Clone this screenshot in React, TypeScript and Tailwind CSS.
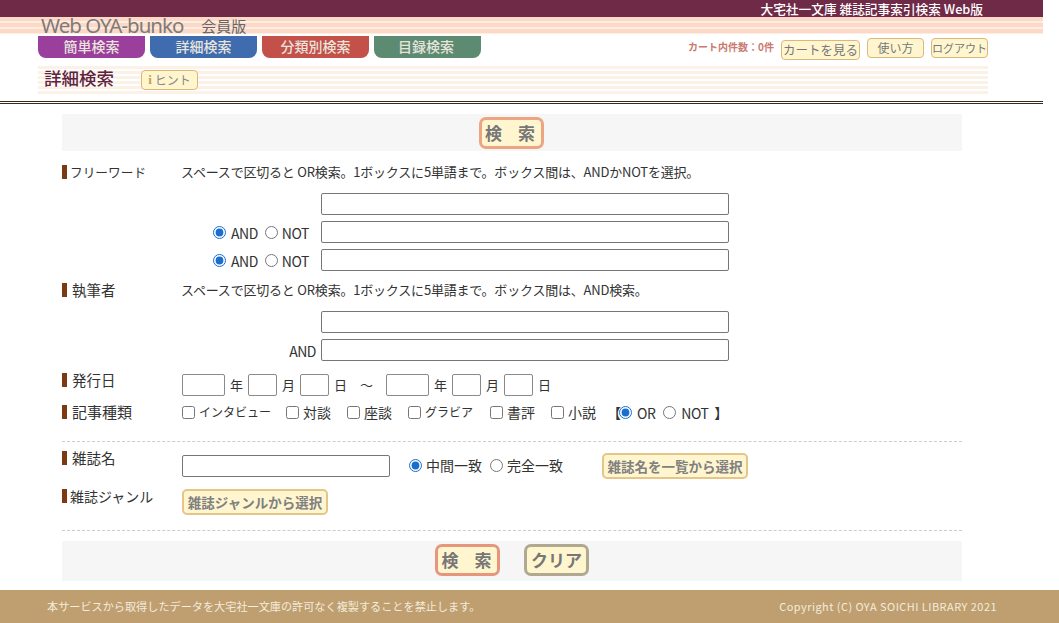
import React from "react";

const FONT = '"Noto Sans CJK JP", "Noto Sans", sans-serif';

function Label({ children, cls = "text-[14.5px] pl-[2px]" }: { children: React.ReactNode; cls?: string }) {
  return (
    <div className="flex items-center w-[120px] shrink-0 leading-[18px] text-[#333]">
      <span className="w-[5px] h-[14px] bg-[#7c3a12] mr-[3px] shrink-0" />
      <span className={`whitespace-nowrap ${cls}`}>{children}</span>
    </div>
  );
}

function TextBox({ w = "w-[408px]" }: { w?: string }) {
  return <input type="text" className={`${w} h-[22px] bg-white border border-[#767676] rounded-[2px] shrink-0`} />;
}

function DateBox({ w }: { w: string }) {
  return <input type="text" className={`${w} h-[22px] bg-white border border-[#8a8a8a] rounded-[2px] shrink-0`} />;
}

function Radio({ checked, name }: { checked?: boolean; name: string }) {
  return <input type="radio" name={name} defaultChecked={checked} className="w-[13px] h-[13px] m-0 accent-[#1a6fce] shrink-0" />;
}

function AndNot({ name }: { name: string }) {
  return (
    <div className="flex items-center w-[140px] h-[22px] pl-[32px] shrink-0 text-[14px] leading-[18px] text-[#333] tracking-[-0.5px]">
      <Radio checked name={name} />
      <span className="ml-[5px] mt-[2px]">AND</span>
      <span className="ml-[7px] flex items-center"><Radio name={name} /></span>
      <span className="ml-[4px] mt-[2px]">NOT</span>
    </div>
  );
}

function Check({ label, w, kana }: { label: string; w: string; kana?: boolean }) {
  return (
    <label className={`flex items-center ${w} shrink-0`}>
      <input type="checkbox" className="w-[13px] h-[13px] m-0 shrink-0" />
      <span className={`ml-[4px] leading-[18px] text-[#333] ${kana ? "text-[12px]" : "text-[14px]"}`}>{label}</span>
    </label>
  );
}

function SmallBtn({ children, cls }: { children: React.ReactNode; cls: string }) {
  return (
    <div className={`flex items-center justify-center h-[20px] bg-[#fff6cf] border border-[#dcb878] rounded-[4px] text-[#777] whitespace-nowrap shrink-0 ${cls}`}>
      {children}
    </div>
  );
}

function WideBtn({ children, w }: { children: React.ReactNode; w: string }) {
  return (
    <div className={`flex items-center justify-center ${w} h-[26px] bg-[#fff6cf] border-2 border-[#e5c688] rounded-[5px] text-[13.5px] font-bold text-[#808080] shrink-0`}>
      {children}
    </div>
  );
}

function BigBtn({ children, color }: { children: React.ReactNode; color: string }) {
  return (
    <div className={`flex items-center justify-center w-[65px] h-[32px] bg-[#fff6cf] border-[3px] ${color} rounded-[7px] text-[17px] font-bold text-[#777] shrink-0`}>
      {children}
    </div>
  );
}

function SearchBtn({ color }: { color: string }) {
  return (
    <BigBtn color={color}>
      <span className="flex gap-[16px] pr-[2px]">
        <span>検</span>
        <span>索</span>
      </span>
    </BigBtn>
  );
}

function Tab({ children, color, cls = "" }: { children: React.ReactNode; color: string; cls?: string }) {
  return (
    <div className={`flex items-center justify-center w-[107px] h-[22px] pb-[2px] ${color} rounded-b-[8px] text-[14px] font-medium text-[#e8e4dc] shrink-0 ${cls}`}>
      {children}
    </div>
  );
}

const HINT = "スペースで区切ると OR検索。1ボックスに5単語まで。ボックス間は、";

export default function App() {
  return (
    <div className="w-[1059px] h-[623px] overflow-hidden bg-white flex flex-col" style={{ fontFamily: FONT }}>
      <div className="w-[1043px] flex flex-col shrink-0">
        <div className="h-[17px] leading-[15px] bg-[#6e2a47] flex items-center justify-end pr-[60px] text-[12.7px] font-medium text-white whitespace-nowrap">
          大宅社一文庫 雑誌記事索引検索 Web版
        </div>
        <div className="h-[17px] pl-[41px] flex items-center gap-[18px] bg-[repeating-linear-gradient(to_bottom,#fbd9c6_0px,#fbd9c6_4px,#fdeee4_4px,#fdeee4_6px)] text-[#777]">
          <span className="text-[20.5px] leading-[17px] tracking-[-1px] whitespace-nowrap text-[#807a78]" style={{ fontFamily: '"Noto Sans", sans-serif' }}>Web OYA-bunko</span>
          <span className="text-[15px] leading-[17px] text-[#666]">会員版</span>
        </div>
        <div className="h-[22px] mt-[2px] pl-[38px] flex items-start">
          <Tab color="bg-[#9b3f9c]">簡単検索</Tab>
          <div className="w-[5px]" />
          <Tab color="bg-[#3f6cae]">詳細検索</Tab>
          <div className="w-[5px]" />
          <Tab color="bg-[#c4504a]">分類別検索</Tab>
          <div className="w-[5px]" />
          <Tab color="bg-[#5c8b72]" cls="pr-[3px]">目録検索</Tab>
          <div className="ml-[207px] mt-[3px] text-[10px] leading-[16px] font-bold text-[#c87a70] w-[93px] whitespace-nowrap">カート内件数：0件</div>
          <SmallBtn cls="w-[79px] mt-[4px] text-[12.5px]">カートを見る</SmallBtn>
          <SmallBtn cls="w-[57px] mt-[2px] ml-[7px] text-[12px]">使い方</SmallBtn>
          <SmallBtn cls="w-[57px] mt-[2px] ml-[7px] text-[11px]">ログアウト</SmallBtn>
        </div>
        <div className="ml-[38px] w-[950px] h-[30px] mt-[8px] flex items-center bg-[repeating-linear-gradient(to_bottom,#fbf1e6_0px,#fbf1e6_3px,#ffffff_3px,#ffffff_5px)]">
          <span className="ml-[6px] -mt-[7px] text-[17.5px] leading-[24px] font-medium text-[#5e2340] whitespace-nowrap">詳細検索</span>
          <div className="ml-[27px] -mt-[2px] flex items-center justify-center w-[57px] h-[20px] bg-[#fff6cf] border border-[#dcb878] rounded-[4px] text-[12px] text-[#888] gap-[3px]">
            <span className="font-bold text-[13px] text-[#b9a25c]" style={{ fontFamily: '"Liberation Serif", serif' }}>i</span>
            <span>ヒント</span>
          </div>
        </div>
        <div className="mt-[5px] h-[3px] border-t border-b border-[#3a2a20]" />
      </div>

      <div className="w-[900px] ml-[62px] flex flex-col mt-[10px]">
        <div className="h-[37px] bg-[#f6f6f6] flex items-center justify-center pr-[2px]">
          <SearchBtn color="border-[#eba582]" />
        </div>

        <div className="flex items-center mt-[12px] h-[18px]">
          <Label cls="text-[12.7px]">フリーワード</Label>
          <span className="-ml-[1px] text-[13px] text-[#333] tracking-[-0.2px]">{HINT}ANDかNOTを選択。</span>
        </div>
        <div className="flex flex-col gap-[6px] mt-[12px]">
          <div className="flex items-center h-[22px]"><div className="w-[259px] shrink-0" /><TextBox /></div>
          <div className="flex items-center h-[22px]"><div className="w-[119px] shrink-0" /><AndNot name="a1" /><TextBox /></div>
          <div className="flex items-center h-[22px]"><div className="w-[119px] shrink-0" /><AndNot name="a2" /><TextBox /></div>
        </div>

        <div className="flex items-center mt-[10px] h-[18px]">
          <Label>執筆者</Label>
          <span className="-ml-[1px] text-[13px] text-[#333] tracking-[-0.2px]">{HINT}AND検索。</span>
        </div>
        <div className="flex flex-col gap-[6px] mt-[12px]">
          <div className="flex items-center h-[22px]"><div className="w-[259px] shrink-0" /><TextBox /></div>
          <div className="flex items-center justify-start h-[22px]">
            <div className="w-[254px] shrink-0 text-right text-[14px] leading-[18px] text-[#333] tracking-[-0.5px] mt-[2px]">AND</div>
            <div className="w-[5px] shrink-0" />
            <TextBox />
          </div>
        </div>

        <div className="flex items-center mt-[13px] h-[22px]">
          <div className="-mt-[10px]"><Label>発行日</Label></div>
          <DateBox w="w-[43px]" />
          <span className="mx-[5px] text-[13px] text-[#333]">年</span>
          <DateBox w="w-[29px]" />
          <span className="mx-[5px] text-[13px] text-[#333]">月</span>
          <DateBox w="w-[29px]" />
          <span className="ml-[5px] text-[13px] text-[#333]">日</span>
          <span className="ml-[13px] mr-[13px] text-[13px] text-[#333]">～</span>
          <DateBox w="w-[43px]" />
          <span className="mx-[5px] text-[13px] text-[#333]">年</span>
          <DateBox w="w-[29px]" />
          <span className="mx-[5px] text-[13px] text-[#333]">月</span>
          <DateBox w="w-[29px]" />
          <span className="ml-[5px] text-[13px] text-[#333]">日</span>
        </div>

        <div className="flex items-center mt-[6px] h-[20px]">
          <Label cls="text-[15px] pl-[2px]">記事種類</Label>
          <Check label="インタビュー" w="w-[104px]" kana />
          <Check label="対談" w="w-[61px]" />
          <Check label="座談" w="w-[61px]" />
          <Check label="グラビア" w="w-[82px]" kana />
          <Check label="書評" w="w-[61px]" />
          <Check label="小説" w="w-[56px]" />
          <span className="text-[14px] leading-[18px] text-[#333] w-[12px]">【</span>
          <Radio checked name="o" />
          <span className="ml-[5px] mt-[2px] text-[14px] leading-[18px] text-[#333] tracking-[-0.5px]">OR</span>
          <span className="ml-[8px] flex items-center"><Radio name="o" /></span>
          <span className="ml-[5px] mt-[2px] text-[14px] leading-[18px] text-[#333] tracking-[-0.5px]">NOT</span>
          <span className="ml-[6px] text-[14px] leading-[18px] text-[#333]">】</span>
        </div>

        <div className="mt-[19px] border-t border-dashed border-[#cccccc]" />

        <div className="flex items-start mt-[11px] h-[26px]">
          <div className="-mt-[4px]"><Label>雑誌名</Label></div>
          <div className="mt-[1px]"><TextBox w="w-[208px]" /></div>
          <div className="flex items-center ml-[19px] mt-[2px] text-[14px] leading-[18px] text-[#333] h-[20px]">
            <Radio checked name="m" />
            <span className="ml-[4px]">中間一致</span>
            <span className="ml-[8px] flex items-center"><Radio name="m" /></span>
            <span className="ml-[4px]">完全一致</span>
          </div>
          <div className="ml-[39px]"><WideBtn w="w-[146px]">雑誌名を一覧から選択</WideBtn></div>
        </div>

        <div className="flex items-start mt-[10px] h-[26px]">
          <div className="-mt-[2px]"><Label cls="text-[14px]">雑誌ジャンル</Label></div>
          <WideBtn w="w-[146px]">雑誌ジャンルから選択</WideBtn>
        </div>

        <div className="mt-[15px] border-t border-dashed border-[#cccccc]" />

        <div className="mt-[10px] h-[40px] pb-[2px] bg-[#f6f6f6] flex items-center justify-center gap-[24px]">
          <SearchBtn color="border-[#e6967c]" />
          <BigBtn color="border-[#b0a890]">クリア</BigBtn>
        </div>
      </div>

      <div className="mt-[9px] h-[33px] bg-[#bf9f70] flex items-center justify-between pl-[47px] pr-[62px] text-[11.15px] text-[#f4ecdc]">
        <span>本サービスから取得したデータを大宅社一文庫の許可なく複製することを禁止します。</span>
        <span className="text-[11px] tracking-[0.45px]">Copyright (C) OYA SOICHI LIBRARY 2021</span>
      </div>
    </div>
  );
}
